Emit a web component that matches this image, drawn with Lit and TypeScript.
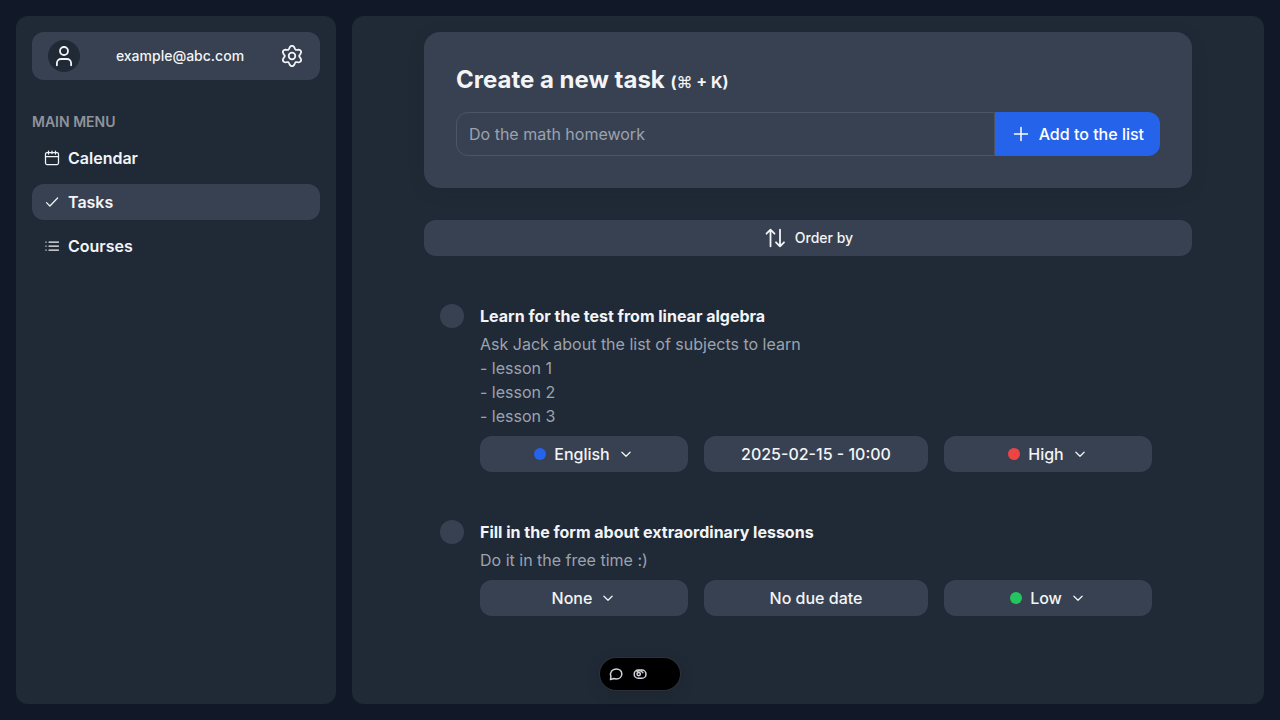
import { LitElement, html, css, svg, nothing } from "lit";
import { customElement, property } from "lit/decorators.js";

const icon = (box: number, size: string, body: unknown) => html`
  <svg class="icon ${size}" viewBox="0 0 ${box} ${box}" aria-hidden="true">${body}</svg>
`;

// Outline of a six-toothed gear centred in a 24-unit box.
const gearOutline = Array.from({ length: 72 }, (_, i) => {
  const a = (i * Math.PI) / 36;
  const r = 8.8 + 1.5 * Math.cos(6 * a) - 0.1 * Math.cos(12 * a);
  return `${(12 + r * Math.sin(a)).toFixed(2)},${(12 - r * Math.cos(a)).toFixed(2)}`;
}).join(" ");

const icons = {
  user: icon(24, "lg", svg`<circle cx="12" cy="7" r="4" /><path d="M4.9 21.3v-2.1a4.200 4.200 0 0 1 4.200-4.200h5.800a4.200 4.200 0 0 1 4.200 4.200v2.100" />`),
  gear: icon(24, "lg", svg`<circle cx="12" cy="12" r="3.3" /><polygon points=${gearOutline} />`),
  calendar: icon(16, "sm", svg`<rect x="1.5" y="2.5" width="13" height="12" rx="1.5" /><path d="M1.5 6.5h13M4.5 1v3M11.5 1v3M8 1v2.5" />`),
  check: icon(16, "sm", svg`<path d="M2.5 8.6l3.4 3.4 7.7-8" />`),
  list: icon(16, "sm", svg`<path d="M5 4h9.5M5 8h9.5M5 12h9.5" /><path opacity=".6" d="M1.5 4h1M1.5 8h1M1.5 12h1" />`),
  plus: icon(20, "md", svg`<path d="M10 3.5v13M3.5 10h13" />`),
  sort: icon(24, "lg", svg`<path d="M7.500 20.300V3.700M3.500 7.700l4-4 4 4M17 3.700v16.600M13 16.300l4 4 4-4" />`),
  chevron: icon(16, "sm", svg`<path d="M3.900 6.200L8 10.300l4.100-4.100" />`),
  comment: icon(16, "sm bold", svg`<path d="M2.500 13.500l.4-3C1.500 6.400 4.200 2.900 8.200 2.900c3.300 0 5.600 2.200 5.600 5s-2.300 5-5.600 5c-.9 0-1.600-.1-2.400-.4z" />`),
  eye: icon(16, "sm bold", svg`<rect x="2.200" y="4" width="11.800" height="8.300" rx="4.150" /><circle cx="6.700" cy="8.100" r="1.700" /><path d="M5 5.400c2-.9 4.600-.4 5.800 1.200" />`),
};

interface Task {
  title: string;
  description: string;
  course: string;
  courseColor?: string;
  due: string;
  priority: string;
  priorityColor: string;
}

const tasks: Task[] = [
  {
    title: "Learn for the test from linear algebra",
    description: "Ask Jack about the list of subjects to learn\n- lesson 1\n- lesson 2\n- lesson 3",
    course: "English",
    courseColor: "blue",
    due: "2025-02-15 - 10:00",
    priority: "High",
    priorityColor: "red",
  },
  {
    title: "Fill in the form about extraordinary lessons",
    description: "Do it in the free time :)",
    course: "None",
    due: "No due date",
    priority: "Low",
    priorityColor: "green",
  },
];

const shared = css`
  * { box-sizing: border-box; }
  :host { display: block; }
  button, input, select { font: inherit; color: inherit; margin: 0; border: 0; background: none; padding: 0; }
  button, select { cursor: pointer; }
  .icon { display: block; flex: none; fill: none; stroke: currentColor; stroke-width: 1.25; stroke-linecap: round; stroke-linejoin: round; }
  .sm { width: 16px; height: 16px; }
  .md { width: 20px; height: 20px; stroke-width: 1.5; }
  .lg { width: 24px; height: 24px; stroke-width: 1.8; }
  .bold { stroke-width: 1.5; }
`;

@customElement("side-bar")
class SideBar extends LitElement {
  static styles = [shared, css`
    .panel { height: 100%; padding: 16px; border-radius: 12px; background: #202a36; }
    .account { display: flex; align-items: center; justify-content: space-between; padding: 8px 16px; border-radius: 12px; background: #384151; font-size: 14px; line-height: 20px; font-weight: 500; }
    .avatar { display: grid; place-items: center; width: 32px; height: 32px; border-radius: 50%; background: #202a36; }
    .heading { margin: 32px 0 8px; font-size: 14px; line-height: 20px; font-weight: 600; color: #8f939b; }
    .menu { display: grid; gap: 8px; }
    .link { display: flex; align-items: center; gap: 8px; height: 36px; padding: 0 12px; border-radius: 12px; color: inherit; text-decoration: none; font-weight: 600; }
    .active { background: #384151; }
  `];

  render() {
    return html`
      <aside class="panel">
        <div class="account">
          <span class="avatar">${icons.user}</span>
          <span>example@abc.com</span>
          <button aria-label="Settings">${icons.gear}</button>
        </div>
        <h2 class="heading">MAIN MENU</h2>
        <nav class="menu">
          <a class="link" href="#calendar">${icons.calendar}Calendar</a>
          <a class="link active" href="#tasks" aria-current="page">${icons.check}Tasks</a>
          <a class="link" href="#courses">${icons.list}Courses</a>
        </nav>
      </aside>
    `;
  }
}

@customElement("task-item")
class TaskItem extends LitElement {
  @property({ attribute: false }) task!: Task;

  static styles = [shared, css`
    .task { display: flex; gap: 16px; padding: 16px; }
    .done { flex: none; appearance: none; width: 24px; height: 24px; border-radius: 50%; background: #384151; cursor: pointer; }
    .done:checked { background: #2563eb; }
    .body { flex: 1; min-width: 0; padding-right: 24px; }
    .title { margin: 0 0 4px; font-size: 16px; line-height: 24px; font-weight: 700; }
    .text { margin: 0 0 8px; white-space: pre-line; color: #9ca3af; }
    .fields { display: grid; grid-template-columns: 13fr 14fr 13fr; gap: 16px; }
    .pill { display: flex; align-items: center; justify-content: center; gap: 8px; height: 36px; padding: 0 16px; border-radius: 12px; background: #384151; font-weight: 500; cursor: pointer; }
    .choice { appearance: none; field-sizing: content; outline: none; }
    .dot { flex: none; width: 12px; height: 12px; border-radius: 50%; }
    .blue { background: #2563eb; }
    .red { background: #ef4444; }
    .green { background: #22c55e; }
  `];

  private choice(label: string, value: string, options: string[], color?: string) {
    return html`
      <label class="pill">
        ${color ? html`<span class="dot ${color}"></span>` : nothing}
        <select class="choice" aria-label=${label}>
          ${options.map((o) => html`<option ?selected=${o === value}>${o}</option>`)}
        </select>
        ${icons.chevron}
      </label>
    `;
  }

  render() {
    const t = this.task;
    return html`
      <article class="task">
        <input class="done" type="checkbox" aria-label=${t.title} />
        <div class="body">
          <h2 class="title">${t.title}</h2>
          <p class="text">${t.description}</p>
          <div class="fields">
            ${this.choice("Course", t.course, ["None", "English"], t.courseColor)}
            <button class="pill">${t.due}</button>
            ${this.choice("Priority", t.priority, ["High", "Low"], t.priorityColor)}
          </div>
        </div>
      </article>
    `;
  }
}

@customElement("app-root")
class AppRoot extends LitElement {
  static styles = [shared, css`
    :host { font: 400 16px/24px Inter, "Noto Sans", sans-serif; color: #f3f4f6; background: #111827; }
    .layout { display: grid; grid-template-columns: 320px minmax(0, 1fr); gap: 16px; min-height: 100vh; padding: 16px; }
    .main { padding: 16px; border-radius: 12px; background: #202a36; }
    .column { display: grid; gap: 32px; max-width: 768px; margin: 0 auto; }
    .create { padding: 32px; border-radius: 16px; background: #384151; box-shadow: 0 4px 16px rgba(17, 24, 39, 0.15); }
    .title { margin: 0 0 16px; font-size: 24px; line-height: 32px; font-weight: 700; }
    .hint { font-size: 16px; line-height: 16px; }
    .key { font-weight: 400; }
    .entry { display: flex; height: 44px; }
    .field { flex: 1; min-width: 0; padding: 0 12px; border: 1px solid #4b5563; border-radius: 12px 0 0 12px; outline: none; }
    .field::placeholder { color: #9ca3af; opacity: 1; }
    .add { display: flex; align-items: center; gap: 8px; padding: 0 16px; border-radius: 0 12px 12px 0; background: #2563eb; color: #fff; font-weight: 500; }
    .order { display: flex; align-items: center; justify-content: center; gap: 8px; height: 36px; border-radius: 12px; background: #384151; font-size: 14px; line-height: 20px; font-weight: 500; }
    .tasks { display: grid; gap: 16px; }
    .tools { position: fixed; left: 50%; bottom: 30px; transform: translateX(-50%); display: flex; align-items: center; gap: 8px; width: 80px; height: 32px; padding: 0 8px; border-radius: 16px; background: #000; color: #d1d5db; box-shadow: 0 0 0 1px #2b313b, 0 4px 16px rgba(0, 0, 0, 0.15); }
  `];

  render() {
    return html`
      <div class="layout">
        <side-bar></side-bar>
        <main class="main">
          <div class="column">
            <form class="create" @submit=${(e: Event) => e.preventDefault()}>
              <h1 class="title" id="create">Create a new task <span class="hint">(<span class="key">⌘</span> + K)</span></h1>
              <div class="entry">
                <input class="field" type="text" aria-labelledby="create" placeholder="Do the math homework" />
                <button class="add" type="submit">${icons.plus}Add to the list</button>
              </div>
            </form>
            <button class="order">${icons.sort}Order by</button>
            <section class="tasks">
              ${tasks.map((t) => html`<task-item .task=${t}></task-item>`)}
            </section>
          </div>
        </main>
        <div class="tools" role="toolbar" aria-label="Page tools">
          <button aria-label="Comment">${icons.comment}</button>
          <button aria-label="Preview">${icons.eye}</button>
        </div>
      </div>
    `;
  }
}
